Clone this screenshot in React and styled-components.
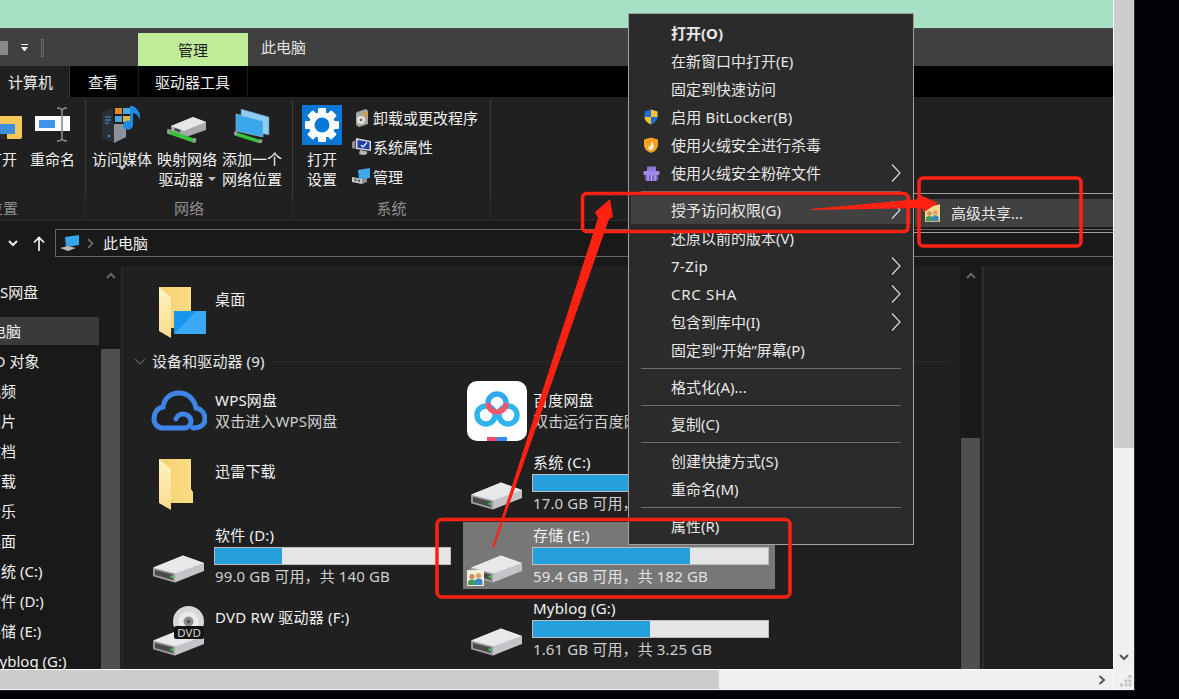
import React from 'react';
import styled, { createGlobalStyle } from 'styled-components';

const GlobalStyle = createGlobalStyle`
  html, body { margin: 0; padding: 0; background: #010208; }
  * { box-sizing: border-box; }
  body {
    font-family: "Noto Sans", "Noto Sans CJK SC", sans-serif;
    font-size: 15px;
    line-height: 20px;
    color: #f0f0f0;
  }
`;

const Page = styled.div`
  position: relative;
  display: flex;
  width: 1179px;
  height: 699px;
  overflow: hidden;
  background: #010208;
`;

const Window = styled.div`
  display: flex;
  width: 1135px;
  height: 691px;
  border-right: 1px solid #333;
  border-bottom: 1px solid #222;
`;

const WindowMain = styled.div`
  display: flex;
  flex-direction: column;
  width: 1113px;
`;

const MintStrip = styled.div`
  height: 28px;
  background: #a6e1c6;
`;

const TitleBar = styled.div`
  display: flex;
  align-items: flex-end;
  height: 38px;
  background: #404040;
  border-top: 1px solid #4c4c4c;
`;

const Qat = styled.div`
  display: flex;
  align-items: center;
  width: 138px;
  height: 37px;
`;

const QatBlock = styled.div`
  width: 8px;
  height: 14px;
  background: #8a8a8a;
`;

const QatCaret = styled.div`
  margin-left: 13px;
  width: 7px;
  height: 7px;
  border-top: 1px solid #eee;
  &::after {
    content: '';
    display: block;
    margin-top: 2px;
    border-left: 3.5px solid transparent;
    border-right: 3.5px solid transparent;
    border-top: 4px solid #eee;
  }
`;

const QatDivider = styled.div`
  margin-left: 13px;
  width: 3px;
  height: 18px;
  border: 1px solid #6a6a6a;
`;

const ManageTab = styled.div`
  display: flex;
  align-items: center;
  justify-content: center;
  width: 110px;
  height: 33px;
  background: #bfec98;
  color: #1c1c1c;
  padding-top: 1px;
`;

const WindowTitle = styled.div`
  align-self: center;
  margin: 0 0 1px 13px;
  color: #e6e6e6;
`;

const TabBar = styled.div`
  display: flex;
  height: 31px;
  background: #000;
`;

const Tab = styled.div`
  display: flex;
  align-items: center;
  width: ${p => p.$width}px;
  padding-left: ${p => p.$pad}px;
  background: ${p => (p.$active ? '#202020' : '#000')};
  color: #eee;
  border-right: 1px solid ${p => (p.$active ? '#3a3a3a' : '#000')};
  ${p => p.$bordered && 'border-left: 1px solid #1c1c1c; border-right: 1px solid #1c1c1c;'}
`;

const Ribbon = styled.div`
  display: flex;
  height: 124px;
  background: #202020;
  border-bottom: 1px solid #2c2c2c;
`;

const RibbonGroup = styled.div`
  display: flex;
  flex-direction: column;
  width: ${p => p.$width}px;
  padding-top: 3px;
`;

const GroupBody = styled.div`
  display: flex;
  justify-content: ${p => p.$justify || 'flex-start'};
  gap: ${p => p.$gap || 0}px;
  height: 97px;
  padding: 0 ${p => p.$right || 0}px 0 ${p => p.$left || 0}px;
  border-right: 1px solid #3c3c3c;
  overflow: hidden;
`;

const GroupLabel = styled.div`
  height: 21px;
  padding-top: 1px;
  text-align: center;
  color: #8f8f8f;
  border-right: 1px solid #2c2c2c;
  ${p => p.$clipped && 'text-align: left; margin-left: -12px; width: 97px;'}
`;

const RibbonButton = styled.div`
  display: flex;
  flex-direction: column;
  align-items: center;
  flex: none;
  width: ${p => p.$width}px;
`;

const ButtonIcon = styled.div`
  display: flex;
  flex: none;
  align-items: flex-end;
  justify-content: center;
  height: 49px;
  padding-bottom: ${p => p.$drop || 3}px;
`;

const ButtonLine = styled.div`
  display: flex;
  align-items: center;
  gap: 4px;
  white-space: nowrap;
  height: 20px;
`;

const Caret = styled.span`
  display: block;
  width: 0;
  height: 0;
  border-left: 4px solid transparent;
  border-right: 4px solid transparent;
  border-top: 4px solid #bbb;
  ${p => p.$below && 'margin-top: -3px;'}
`;

const CommandList = styled.div`
  display: flex;
  flex-direction: column;
  margin-left: 8px;
  padding-top: 3px;
`;

const CommandRow = styled.div`
  display: flex;
  align-items: center;
  height: 29.5px;
  white-space: nowrap;
`;

const CommandIcon = styled.span`
  display: flex;
  justify-content: center;
  width: 23px;
`;

const AddressRow = styled.div`
  display: flex;
  align-items: flex-start;
  height: 45px;
  background: #191919;
  padding-top: 8px;
`;

const NavButton = styled.div`
  display: flex;
  align-items: center;
  justify-content: center;
  width: ${p => p.$width}px;
  height: 28px;
`;

const AddressBox = styled.div`
  display: flex;
  align-items: center;
  flex: 1;
  height: 28px;
  padding-left: 4px;
  margin-left: 4px;
  border: 1px solid #666;
  border-right: none;
`;

const Crumb = styled.span`
  display: flex;
  margin: 0 9px 0 7px;
`;

const Body = styled.div`
  display: flex;
  height: 403px;
  overflow: hidden;
  background: #202020;
`;

const Sidebar = styled.div`
  width: 101px;
  padding-top: 12px;
  background: #191919;
  overflow: hidden;
`;

const TreeRow = styled.div`
  display: flex;
  align-items: center;
  width: 99px;
  height: 28px;
  margin-bottom: ${p => (p.$gap ? p.$gap : 2)}px;
  white-space: nowrap;
  background: ${p => (p.$selected ? '#3a3a3a' : 'transparent')};
`;

const TreeText = styled.span`
  margin-left: ${p => p.$offset}px;
`;

const ScrollTrack = styled.div`
  display: flex;
  flex-direction: column;
  flex: none;
  width: ${p => p.$width}px;
  background: #191919;
`;

const ScrollUp = styled.div`
  display: flex;
  justify-content: center;
  height: ${p => p.$height}px;
  padding-top: 6px;
`;

const ScrollThumb = styled.div`
  flex: 1;
  background: #4f4f4f;
  margin: 0 ${p => p.$side || 0}px;
`;

const PaneLine = styled.div`
  flex: none;
  width: ${p => p.$width || 1}px;
  margin-left: ${p => p.$left || 0}px;
  background: #2d2d2d;
`;

const Main = styled.div`
  width: 837px;
  flex: none;
  padding: 11px 0 0 10px;
  overflow: hidden;
`;

const TileGrid = styled.div`
  display: grid;
  grid-template-columns: 312px 312px;
  grid-auto-rows: 67px;
  gap: 6px;
  margin-left: 12px;
`;

const Tile = styled.div`
  display: flex;
  height: 67px;
  background: ${p => (p.$selected ? '#777' : 'transparent')};
`;

const TileIcon = styled.div`
  position: relative;
  flex: none;
  width: 69px;
  padding: ${p => p.$y}px 0 0 ${p => p.$x}px;
  svg { display: block; }
`;

const IconBadge = styled.span`
  position: absolute;
  left: 4px;
  top: 48px;
  display: block;
`;

const TileText = styled.div`
  display: flex;
  flex-direction: column;
  padding-top: ${p => p.$top}px;
  white-space: nowrap;
`;

const TileName = styled.div`
  padding-left: 1px;
  color: #f2f2f2;
  letter-spacing: 0.2px;
`;

const TileMeta = styled.div`
  padding-left: 1px;
  margin-top: ${p => p.$top || 1}px;
  color: ${p => (p.$light ? '#e2e2e2' : '#cfcfcf')};
  letter-spacing: 0.13px;
`;

const UsageBar = styled.div`
  width: 237px;
  height: 18px;
  margin-top: 2px;
  background: #e6e6e6;
  border: 1px solid #bcbcbc;
`;

const UsageFill = styled.div`
  height: 100%;
  background: #26a0da;
`;

const GroupHeader = styled.div`
  display: flex;
  align-items: center;
  height: 20px;
  margin: 8px 10px 4px 0;
  padding-bottom: 2px;
  color: #e8e8e8;
  letter-spacing: 0.1px;
`;

const HeaderChevron = styled.span`
  display: flex;
  justify-content: center;
  width: 14px;
  margin-right: 5px;
`;

const HeaderLine = styled.span`
  flex: 1;
  height: 1px;
  margin-left: 8px;
  background: #2d2d2d;
`;

const HScroll = styled.div`
  height: 21px;
  background: #f0f0f0;
  border-top: 1px solid #fff;
  padding-bottom: 1px;
  display: flex;
  align-items: center;
`;

const HThumb = styled.div`
  width: 719px;
  height: 19px;
  background: #cdcdcd;
`;

const HArrow = styled.span`
  display: flex;
  margin-left: auto;
  margin-right: 7px;
`;

const VScroll = styled.div`
  display: flex;
  flex-direction: column;
  width: 21px;
  border-left: 1px solid #fff;
  background: #f0f0f0;
`;

const VThumb = styled.div`
  height: 448px;
  background: #cdcdcd;
`;

const VArrow = styled.span`
  display: flex;
  justify-content: center;
  margin-top: 206px;
`;

const Grip = styled.span`
  display: flex;
  justify-content: flex-end;
  margin: 14px 2px 0 0;
`;

const ContextMenu = styled.div`
  position: absolute;
  left: 628px;
  top: 13px;
  width: 286px;
  height: 532px;
  padding: 5px 0;
  background: #2b2b2b;
  border: 1px solid #a0a0a0;
`;

const MenuRow = styled.div`
  display: flex;
  align-items: center;
  height: 28px;
  margin: 0 2px;
  padding-left: 12px;
  color: #e8e8e8;
  white-space: nowrap;
  font-weight: ${p => (p.$bold ? 700 : 400)};
  letter-spacing: ${p => p.$spread || 0}px;
  background: ${p => (p.$active ? '#414141' : 'transparent')};
`;

const MenuIcon = styled.span`
  display: flex;
  flex: none;
  width: 28px;
`;

const MenuChevron = styled.span`
  display: flex;
  margin-left: auto;
  margin-right: 10px;
`;

const MenuSeparator = styled.div`
  height: 1px;
  margin: 4px 12px 4px 12px;
  background: #6e6e6e;
`;

const SubMenu = styled.div`
  position: absolute;
  left: 913px;
  top: 193px;
  width: 200px;
  height: 40px;
  padding-top: 5px;
  border: 1px solid #a0a0a0;
  border-right: none;
`;

const SubRow = styled.div`
  display: flex;
  align-items: center;
  height: 28px;
  margin-left: 1px;
  padding-left: 10px;
  background: #414141;
  color: #e8e8e8;
`;

const SubIcon = styled.span`
  display: flex;
  width: 26px;
`;

const Annotations = styled.svg`
  position: absolute;
  left: 0;
  top: 0;
  pointer-events: none;
`;

const Chevron = ({ d, w, h, color = '#666', sw = 2 }) => (
  <svg width={w} height={h} viewBox={`0 0 ${w} ${h}`} fill="none">
    <path d={d} stroke={color} strokeWidth={sw} />
  </svg>
);

const SubArrow = () => (
  <svg width="10" height="18" viewBox="0 0 10 18" fill="none">
    <path d="M1 0.5 L9 9 L1 17.5" stroke="#dde3ea" strokeWidth="1.1" />
  </svg>
);

const DriveShape = () => (
  <>
    <path d="M1 13 L31 0.5 L52 8 L52 16 L23 27.5 L1 21 Z" fill="#c4c4c8" />
    <path d="M1 12.5 L31 0.5 L52 8 L23 18.5 Z" fill="#e9e9ec" />
    <path d="M1 13 L23 18.5 L23 27.5 L1 21 Z" fill="#9a9a9c" />
    <path d="M3 15 L21 19.5 L21 25 L3 20 Z" fill="#4b4b4d" />
    <rect x="18.5" y="20.5" width="2.6" height="2.4" fill="#27d13c" />
  </>
);

const DriveIcon = () => (
  <svg width="53" height="28" viewBox="0 0 53 28">
    <DriveShape />
  </svg>
);

const DvdIcon = () => (
  <svg width="53" height="50" viewBox="0 0 53 50">
    <g transform="translate(0 22)">
      <DriveShape />
    </g>
    <circle cx="36.5" cy="15.5" r="15.5" fill="#d8d8d8" />
    <circle cx="36.5" cy="15.5" r="10" fill="#ececec" />
    <circle cx="36.5" cy="15.5" r="5" fill="#8c8c8c" />
    <circle cx="36.5" cy="15.5" r="2" fill="#555" />
    <rect x="22" y="20" width="30" height="13" rx="2.5" fill="#141414" />
    <text x="37" y="30.5" textAnchor="middle" fontSize="11.5" fill="#d6d6d6" fontFamily="Noto Sans, sans-serif">DVD</text>
  </svg>
);

const FolderIcon = ({ overlay }) => (
  <svg width="48" height="51" viewBox="0 0 48 51">
    <defs>
      <linearGradient id="folderBack" x1="0" y1="0" x2="1" y2="0">
        <stop offset="0" stopColor="#f6cf6e" />
        <stop offset="1" stopColor="#fbdd85" />
      </linearGradient>
      <linearGradient id="folderFlap" x1="0" y1="0" x2="0" y2="1">
        <stop offset="0" stopColor="#fff2bf" />
        <stop offset="1" stopColor="#f9dd8d" />
      </linearGradient>
    </defs>
    <path d="M1 0 H33 V44 H13 Z" fill="url(#folderBack)" />
    <path d="M1 0 L13 10 V51 L1 44 Z" fill="url(#folderFlap)" />
    {overlay ? (
      <>
        <rect x="13" y="41" width="4" height="4" fill="#3a3024" />
        <rect x="16" y="24" width="32" height="23" fill="#1796f0" />
        <path d="M16 47 L38 24 H48 V47 Z" fill="#3ba9f5" />
      </>
    ) : (
      <path d="M33 30 L35 33 V44 H33 Z" fill="#fbdd85" />
    )}
  </svg>
);

const CloudIcon = () => (
  <svg width="56" height="41" viewBox="0 0 56 41" fill="none">
    <path
      d="M42 38 C50 38 54 34 54 29 C54 23 50 19 45 18 C43 8 36 3 28 3 C19 3 13 9 12 17 C6 18 3 23 3 29 C3 34 7 38 12 38 H33 C37 38 40 35 40 31 C40 27 36 24 32 24 C29 24 26 26 25 29"
      stroke="#3d85e6"
      strokeWidth="5"
      strokeLinecap="round"
    />
  </svg>
);

const BaiduIcon = () => (
  <svg width="60" height="60" viewBox="0 0 60 60" fill="none">
    <rect width="60" height="60" rx="10" fill="#fff" />
    <circle cx="19" cy="34" r="9" stroke="#2fb4ee" strokeWidth="5.5" />
    <circle cx="41" cy="34" r="9" stroke="#2fb4ee" strokeWidth="5.5" />
    <path d="M21 22 A9 9 0 0 1 39 22" stroke="#2fa8ee" strokeWidth="5.5" />
    <path d="M21 22 A9 9 0 0 0 39 22" stroke="#f2566f" strokeWidth="5.5" />
    <rect x="20" y="56" width="10" height="4" fill="#ef4a6a" />
    <rect x="30" y="56" width="10" height="4" fill="#2b8ff2" />
  </svg>
);

const People = () => (
  <>
    <circle cx="5" cy="6.5" r="2.6" fill="#c98f5a" />
    <path d="M1 15 V12.5 Q1 9.5 5 9.5 Q8.5 9.5 8.5 12.5 V15 Z" fill="#3f9a5f" />
    <circle cx="11.5" cy="5.5" r="2.6" fill="#d8a06c" />
    <path d="M8 15 V11.5 Q8 8.5 11.5 8.5 Q15.5 8.5 15.5 11.5 V15 Z" fill="#3a86c8" />
  </>
);

const ShareBadge = () => (
  <svg width="17" height="16" viewBox="0 0 17 16">
    <rect width="17" height="16" fill="#f3eed7" />
    <People />
  </svg>
);

const ShareFolderIcon = () => (
  <svg width="15" height="18" viewBox="0 0 17 20">
    <path d="M0 4 L17 0 V20 H0 Z" fill="#f5d98a" />
    <g transform="translate(0 4)">
      <People />
    </g>
  </svg>
);

const ShieldIcon = () => (
  <svg width="16" height="16" viewBox="0 0 16 16">
    <path d="M8 0.5 L14.5 2.5 V8 Q14.5 13 8 15.5 Q1.5 13 1.5 8 V2.5 Z" fill="#1d6fd0" />
    <path d="M8 0.5 L14.5 2.5 V8 H8 Z" fill="#f4c22f" />
    <path d="M8 8 H1.5 Q1.5 13 8 15.5 Z" fill="#f4c22f" />
  </svg>
);

const FireShieldIcon = () => (
  <svg width="16" height="16" viewBox="0 0 16 16">
    <path d="M8 0.5 L15 2.5 V8 Q15 13 8 16 Q1 13 1 8 V2.5 Z" fill="#f6a21e" />
    <path d="M8.5 4 Q11.5 8 10.5 11 Q9.5 13.5 7 13 Q4.5 12 6 9 Q7 10 7.5 9 Q8.5 7 8.5 4 Z" fill="#fff3dc" />
  </svg>
);

const ShredIcon = () => (
  <svg width="17" height="15" viewBox="0 0 17 15">
    <rect x="4" y="0.5" width="9" height="5" rx="1" fill="#8f78d8" />
    <rect x="0.5" y="5" width="16" height="4" rx="1" fill="#a08ae6" />
    <path d="M2 9 H15 V13 Q15 15 13 15 H4 Q2 15 2 13 Z" fill="#7d63cc" />
    <path d="M5 9 V15 M8.5 9 V15 M12 9 V15" stroke="#c7b9f2" strokeWidth="1" />
  </svg>
);

const OpenFolderIcon = () => (
  <svg width="42" height="26" viewBox="0 0 42 26">
    <path d="M0 0 H12 L15 3 H40 Q41 3 41 4 V24 Q41 26 39 26 H0 Z" fill="#f7c65a" />
    <rect x="8" y="11" width="26" height="10" fill="#3c8fdc" />
    <rect x="16" y="21" width="10" height="5" fill="#2b2b2b" />
  </svg>
);

const RenameIcon = () => (
  <svg width="36" height="35" viewBox="0 0 36 35">
    <rect x="0" y="9" width="35" height="15" fill="#fbfbfb" />
    <rect x="4" y="13" width="16" height="8" fill="#3d94e8" />
    <path d="M22 1 Q27 1 27 4 V31 Q27 34 22 34 M32 1 Q27 1 27 4 M32 34 Q27 34 27 31" stroke="#8a8a8a" strokeWidth="1.6" fill="none" />
  </svg>
);

const MediaIcon = () => (
  <svg width="40" height="38" viewBox="0 0 40 38">
    <path d="M0 7 L10 3 L24 8 V32 L12 38 L0 33 Z" fill="#2a2f38" />
    <path d="M12 38 V14 L24 8 V32 Z" fill="#8d929a" />
    <path d="M3 12 H9 M3 15 H9 M3 18 H7" stroke="#3fa7e8" strokeWidth="1" />
    <circle cx="7" cy="31" r="1" fill="#3fd0f0" />
    <rect x="11" y="1" width="19" height="18" fill="#1d1d1d" />
    <rect x="13" y="3" width="7" height="6" fill="#e0872c" />
    <rect x="21" y="3" width="7" height="6" fill="#4aa8dc" />
    <rect x="13" y="11" width="7" height="6" fill="#4aa8dc" />
    <rect x="21" y="11" width="7" height="6" fill="#d9b64a" />
    <path d="M31 1 V20 A5 4.5 0 1 1 28 16 V1 Z" fill="#1f8be0" />
    <path d="M31 1 Q39 5 38 15 Q36 9 31 8 Z" fill="#1f8be0" />
  </svg>
);

const NetDriveIcon = () => (
  <svg width="40" height="27" viewBox="0 0 40 27">
    <path d="M4 10 L26 1 L39 6 V14 L16 22 L4 17 Z" fill="#a9a9ad" />
    <path d="M4 10 L26 1 L39 6 L17 15 Z" fill="#e6e6e8" />
    <rect x="8" y="12" width="6" height="2.5" fill="#444" transform="rotate(20 8 12)" />
    <path d="M2 16 L28 25" stroke="#36c23a" strokeWidth="4" />
    <path d="M0 15 L3 16 M26 24 L29 25" stroke="#9a9a9a" strokeWidth="4.5" />
  </svg>
);

const NetPlaceIcon = () => (
  <svg width="36" height="34" viewBox="0 0 36 34">
    <path d="M7 0 L35 8 V26 L7 20 Z" fill="#8ecdf3" stroke="#5a7f96" strokeWidth="0.6" />
    <path d="M2 5 L29 12 V28 L2 22 Z" fill="#3aa6ec" stroke="#9cc" strokeWidth="0.6" />
    <path d="M2 25 L27 33" stroke="#36c23a" strokeWidth="3.5" />
    <path d="M0 24 L3 25 M25 32 L28 33" stroke="#9a9a9a" strokeWidth="4" />
  </svg>
);

const GearTile = () => (
  <svg width="40" height="40" viewBox="0 0 40 40">
    <rect width="40" height="40" fill="#0a78d7" />
    {[0, 45, 90, 135, 180, 225, 270, 315].map(a => (
      <rect key={a} x="16" y="3" width="8" height="8" rx="1" fill="#fff" transform={`rotate(${a} 20 20)`} />
    ))}
    <circle cx="20" cy="20" r="13" fill="#fff" />
    <circle cx="20" cy="20" r="7.5" fill="#0a78d7" />
  </svg>
);

const UninstallIcon = () => (
  <svg width="14" height="18" viewBox="0 0 14 18">
    <path d="M2 3 L11 0 L13 2 V15 L4 18 L1 16 V4 Z" fill="#a7a7a1" />
    <circle cx="6" cy="11" r="4" fill="#e4e4e0" />
    <circle cx="6" cy="11" r="1.4" fill="#666" />
    <rect x="9" y="3" width="3" height="5" fill="#e3953a" />
  </svg>
);

const SystemIcon = () => (
  <svg width="20" height="18" viewBox="0 0 20 18">
    <path d="M4 0 L19 3 V13 L4 11 Z" fill="#d8d8e0" />
    <path d="M5.5 2 L17.5 4 V11.5 L5.5 9.8 Z" fill="#1f3fae" />
    <path d="M9 7 L11 9 L15 4.5" stroke="#fff" strokeWidth="1.2" fill="none" />
    <path d="M0 4 L3.5 2 V11 L0 10 Z" fill="#8c8c8c" />
    <path d="M8 12 L15 13.5 V16 Q11 18 7 16 Z" fill="#b4b4b4" />
  </svg>
);

const ManageIcon = () => (
  <svg width="19" height="17" viewBox="0 0 19 17">
    <path d="M6 2 L18 0 V10 L7 12 Z" fill="#3ea8ec" />
    <path d="M0 9 L10 11 V16 L0 14 Z" fill="#c8c8c8" />
    <path d="M10 11 L15 10 V14 L10 16 Z" fill="#8e8e8e" />
    <circle cx="3.5" cy="12" r="1.2" fill="#555" />
    <circle cx="7" cy="12.8" r="1.2" fill="#555" />
  </svg>
);

const ComputerIcon = () => (
  <svg width="20" height="17" viewBox="0 0 20 17">
    <path d="M5 2 L19 0 V10 L6 12 Z" fill="#35a4ea" />
    <path d="M0 13 L8 11 L16 13 L8 16 Z" fill="#b9b9b9" />
  </svg>
);

const UpArrow = () => (
  <svg width="12" height="15" viewBox="0 0 12 15" fill="none">
    <path d="M6 15 V1.5 M1 6.5 L6 1.5 L11 6.5" stroke="#fff" strokeWidth="1.6" />
  </svg>
);

const GripIcon = () => (
  <svg width="12" height="12" viewBox="0 0 12 12" fill="#c2c2c2">
    <rect x="8.5" y="0" width="3" height="3" />
    <rect x="4.5" y="4.5" width="3" height="3" />
    <rect x="8.5" y="4.5" width="3" height="3" />
    <rect x="0" y="8.5" width="3" height="3" />
    <rect x="4.5" y="8.5" width="3" height="3" />
    <rect x="8.5" y="8.5" width="3" height="3" />
  </svg>
);

const treeItems = [
  { text: 'WPS网盘', offset: -23, gap: 11 },
  { text: '此电脑', offset: -24, selected: true },
  { text: '3D 对象', offset: -14 },
  { text: '视频', offset: -14 },
  { text: '图片', offset: -14 },
  { text: '文档', offset: -14 },
  { text: '下载', offset: -14 },
  { text: '音乐', offset: -14 },
  { text: '桌面', offset: -14 },
  { text: '系统 (C:)', offset: -14 },
  { text: '软件 (D:)', offset: -14 },
  { text: '存储 (E:)', offset: -14 },
  { text: 'Myblog (G:)', offset: -14 },
];

const drives = {
  wps: { name: 'WPS网盘', meta: '双击进入WPS网盘' },
  baidu: { name: '百度网盘', meta: '双击运行百度网盘' },
  c: { name: '系统 (C:)', used: 86, meta: '17.0 GB 可用，共 120 GB' },
  d: { name: '软件 (D:)', used: 28.6, meta: '99.0 GB 可用，共 140 GB' },
  e: { name: '存储 (E:)', used: 67, meta: '59.4 GB 可用，共 182 GB' },
  g: { name: 'Myblog (G:)', used: 49.6, meta: '1.61 GB 可用，共 3.25 GB' },
};

const DriveTile = ({ drive, selected, badge }) => (
  <Tile $selected={selected}>
    <TileIcon $x={7} $y={33}>
      <DriveIcon />
      {badge && (
        <IconBadge>
          <ShareBadge />
        </IconBadge>
      )}
    </TileIcon>
    <TileText $top={3}>
      <TileName>{drive.name}</TileName>
      <UsageBar>
        <UsageFill style={{ width: `${drive.used}%` }} />
      </UsageBar>
      <TileMeta $light={selected}>{drive.meta}</TileMeta>
    </TileText>
  </Tile>
);

const InfoTile = ({ icon, x, y, info }) => (
  <Tile>
    <TileIcon $x={x} $y={y}>
      {icon}
    </TileIcon>
    <TileText $top={14}>
      <TileName>{info.name}</TileName>
      <TileMeta $top={1}>{info.meta}</TileMeta>
    </TileText>
  </Tile>
);

const NameTile = ({ icon, x, y, name }) => (
  <Tile>
    <TileIcon $x={x} $y={y}>
      {icon}
    </TileIcon>
    <TileText $top={12}>
      <TileName>{name}</TileName>
    </TileText>
  </Tile>
);

const menuTop = [
  { text: '打开(O)', bold: true },
  { text: '在新窗口中打开(E)' },
  { text: '固定到快速访问' },
  { text: '启用 BitLocker(B)', icon: <ShieldIcon />, spread: 0.2 },
  { text: '使用火绒安全进行杀毒', icon: <FireShieldIcon /> },
  { text: '使用火绒安全粉碎文件', icon: <ShredIcon />, sub: true },
];

const menuMiddle = [
  { text: '授予访问权限(G)', sub: true, active: true },
  { text: '还原以前的版本(V)' },
  { text: '7-Zip', sub: true, spread: 0.4 },
  { text: 'CRC SHA', sub: true, spread: 0.7 },
  { text: '包含到库中(I)', sub: true },
  { text: '固定到“开始”屏幕(P)' },
];

const MenuItems = ({ items }) =>
  items.map(item => (
    <MenuRow key={item.text} $bold={item.bold} $active={item.active} $spread={item.spread}>
      <MenuIcon>{item.icon}</MenuIcon>
      {item.text}
      {item.sub && (
        <MenuChevron>
          <SubArrow />
        </MenuChevron>
      )}
    </MenuRow>
  ));

export default function App() {
  return (
    <Page>
      <GlobalStyle />
      <Window>
        <WindowMain>
          <MintStrip />
          <TitleBar>
            <Qat>
              <QatBlock />
              <QatCaret />
              <QatDivider />
            </Qat>
            <ManageTab>管理</ManageTab>
            <WindowTitle>此电脑</WindowTitle>
          </TitleBar>
          <TabBar>
            <Tab $active $width={70} $pad={8}>计算机</Tab>
            <Tab $width={68} $pad={18}>查看</Tab>
            <Tab $bordered $width={110} $pad={16}>驱动器工具</Tab>
          </TabBar>
          <Ribbon>
            <RibbonGroup $width={86}>
              <GroupBody $justify="flex-end" $gap={13} $right={10}>
                <RibbonButton $width={30}>
                  <ButtonIcon $drop={10}>
                    <OpenFolderIcon />
                  </ButtonIcon>
                  <ButtonLine>打开</ButtonLine>
                </RibbonButton>
                <RibbonButton $width={45}>
                  <ButtonIcon $drop={7}>
                    <RenameIcon />
                  </ButtonIcon>
                  <ButtonLine>重命名</ButtonLine>
                </RibbonButton>
              </GroupBody>
              <GroupLabel $clipped>位置</GroupLabel>
            </RibbonGroup>
            <RibbonGroup $width={207}>
              <GroupBody $gap={5} $left={6}>
                <RibbonButton $width={60}>
                  <ButtonIcon $drop={6}>
                    <MediaIcon />
                  </ButtonIcon>
                  <ButtonLine>访问媒体</ButtonLine>
                  <Caret $below />
                </RibbonButton>
                <RibbonButton $width={60}>
                  <ButtonIcon $drop={6}>
                    <NetDriveIcon />
                  </ButtonIcon>
                  <ButtonLine>映射网络</ButtonLine>
                  <ButtonLine>
                    驱动器
                    <Caret />
                  </ButtonLine>
                </RibbonButton>
                <RibbonButton $width={60}>
                  <ButtonIcon $drop={6}>
                    <NetPlaceIcon />
                  </ButtonIcon>
                  <ButtonLine>添加一个</ButtonLine>
                  <ButtonLine>网络位置</ButtonLine>
                </RibbonButton>
              </GroupBody>
              <GroupLabel>网络</GroupLabel>
            </RibbonGroup>
            <RibbonGroup $width={198}>
              <GroupBody $left={9}>
                <RibbonButton $width={40}>
                  <ButtonIcon $drop={4}>
                    <GearTile />
                  </ButtonIcon>
                  <ButtonLine>打开</ButtonLine>
                  <ButtonLine>设置</ButtonLine>
                </RibbonButton>
                <CommandList>
                  <CommandRow>
                    <CommandIcon><UninstallIcon /></CommandIcon>
                    卸载或更改程序
                  </CommandRow>
                  <CommandRow>
                    <CommandIcon><SystemIcon /></CommandIcon>
                    系统属性
                  </CommandRow>
                  <CommandRow>
                    <CommandIcon><ManageIcon /></CommandIcon>
                    管理
                  </CommandRow>
                </CommandList>
              </GroupBody>
              <GroupLabel>系统</GroupLabel>
            </RibbonGroup>
          </Ribbon>
          <AddressRow>
            <NavButton $width={26}>
              <Chevron w={10} h={7} d="M1 1 L5 5 L9 1" color="#eee" />
            </NavButton>
            <NavButton $width={25}>
              <UpArrow />
            </NavButton>
            <AddressBox>
              <ComputerIcon />
              <Crumb>
                <Chevron w={7} h={11} d="M1 1 L5.5 5.5 L1 10" color="#777" sw={1.5} />
              </Crumb>
              <span>此电脑</span>
            </AddressBox>
          </AddressRow>
          <Body>
            <Sidebar>
              {treeItems.map(item => (
                <TreeRow key={item.text} $selected={item.selected} $gap={item.gap}>
                  <TreeText $offset={item.offset}>{item.text}</TreeText>
                </TreeRow>
              ))}
            </Sidebar>
            <ScrollTrack $width={19}>
              <ScrollUp $height={83}>
                <Chevron w={10} h={7} d="M1 6 L5 2 L9 6" />
              </ScrollUp>
              <ScrollThumb />
            </ScrollTrack>
            <PaneLine $left={2} />
            <Main>
              <TileGrid>
                <NameTile icon={<FolderIcon overlay />} x={13} y={10} name="桌面" />
              </TileGrid>
              <GroupHeader>
                <HeaderChevron>
                  <Chevron w={12} h={7} d="M1 1 L6 6 L11 1" color="#5c5c5c" sw={1.2} />
                </HeaderChevron>
                设备和驱动器 (9)
                <HeaderLine />
              </GroupHeader>
              <TileGrid>
                <InfoTile icon={<CloudIcon />} x={6} y={14} info={drives.wps} />
                <InfoTile icon={<BaiduIcon />} x={4} y={5} info={drives.baidu} />
                <NameTile icon={<FolderIcon />} x={13} y={10} name="迅雷下载" />
                <DriveTile drive={drives.c} />
                <DriveTile drive={drives.d} />
                <DriveTile drive={drives.e} selected badge />
                <NameTile icon={<DvdIcon />} x={7} y={11} name="DVD RW 驱动器 (F:)" />
                <DriveTile drive={drives.g} />
              </TileGrid>
            </Main>
            <ScrollTrack $width={21}>
              <ScrollUp $height={172}>
                <Chevron w={10} h={7} d="M1 6 L5 2 L9 6" />
              </ScrollUp>
              <ScrollThumb $side={1} />
            </ScrollTrack>
            <PaneLine $left={1} $width={2} />
          </Body>
          <HScroll>
            <HThumb />
            <HArrow>
              <Chevron w={8} h={10} d="M1.5 1 L6 5 L1.5 9" color="#555" />
            </HArrow>
          </HScroll>
        </WindowMain>
        <VScroll>
          <VThumb />
          <VArrow>
            <Chevron w={10} h={7} d="M1 1 L5 5 L9 1" color="#555" />
          </VArrow>
          <Grip>
            <GripIcon />
          </Grip>
        </VScroll>
      </Window>
      <ContextMenu>
        <MenuItems items={menuTop} />
        <MenuSeparator />
        <MenuItems items={menuMiddle} />
        <MenuSeparator />
        <MenuItems items={[{ text: '格式化(A)...' }]} />
        <MenuSeparator />
        <MenuItems items={[{ text: '复制(C)' }]} />
        <MenuSeparator />
        <MenuItems items={[{ text: '创建快捷方式(S)' }, { text: '重命名(M)' }]} />
        <MenuSeparator />
        <MenuItems items={[{ text: '属性(R)' }]} />
      </ContextMenu>
      <SubMenu>
        <SubRow>
          <SubIcon>
            <ShareFolderIcon />
          </SubIcon>
          高级共享...
        </SubRow>
      </SubMenu>
      <Annotations width="1179" height="699" viewBox="0 0 1179 699" fill="none">
        <rect x="582.5" y="193.5" width="325.5" height="38" rx="4" stroke="#ff2213" strokeWidth="3.5" />
        <rect x="919" y="178" width="162" height="68" rx="4" stroke="#ff2213" strokeWidth="3.5" />
        <rect x="437" y="519.5" width="353" height="77.5" rx="5" stroke="#ff2213" strokeWidth="3.5" />
        <path d="M492 548 L598 218 L595 212 L610 199 L613 217 L609 219 L494 548 Z" fill="#ff2213" />
        <path d="M811 209 L920 199 L918 194 L938 203 L924 212 L922 208 L811 210 Z" fill="#ff2213" />
      </Annotations>
    </Page>
  );
}
